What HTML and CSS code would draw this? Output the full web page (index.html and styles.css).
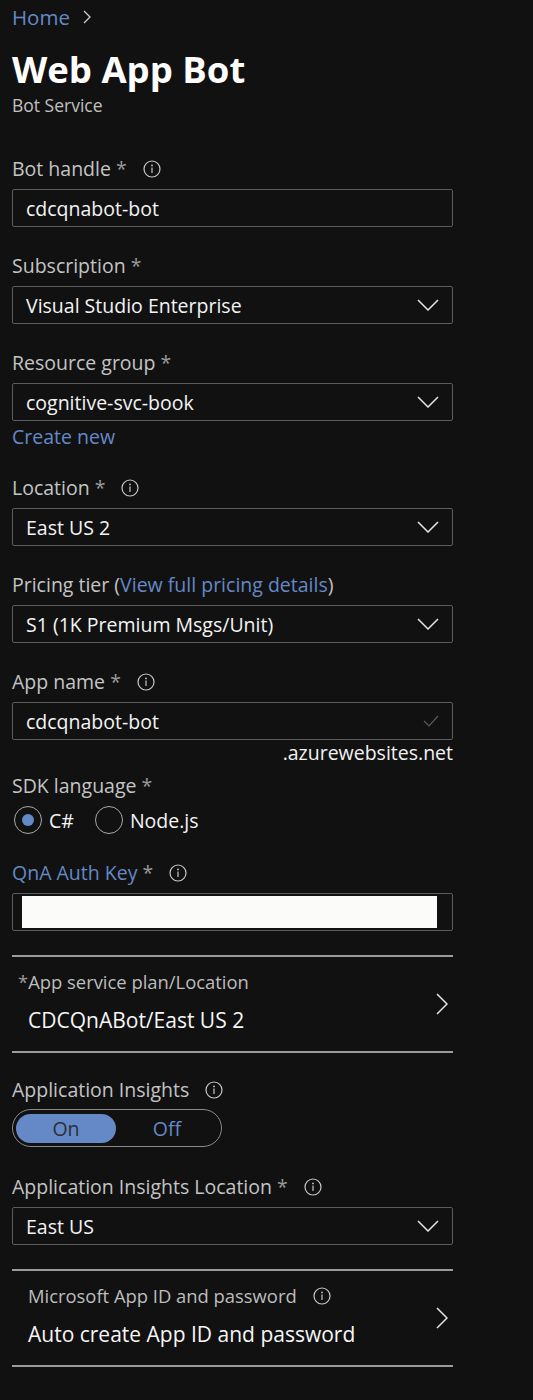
FILE: index.html
```html
<!DOCTYPE html>
<html>
<head>
<meta charset="utf-8">
<link rel="stylesheet" href="styles.css">
</head>
<body>
<div class="page">
  <div class="crumb"><span class="link">Home</span><svg class="crumb-chev" width="10" height="16" viewBox="0 0 10 16"><path d="M2 2 L8 8 L2 14" fill="none" stroke="#cfcfcf" stroke-width="1.3"/></svg></div>
  <h1 class="title">Web App Bot</h1>
  <div class="subtitle">Bot Service</div>

  <div class="field first">
    <div class="label">Bot handle <span class="req">*</span><svg class="info" width="18" height="18" viewBox="0 0 18 18"><circle cx="9" cy="9" r="8" fill="none" stroke="#c8c8c8" stroke-width="1.2"/><circle cx="9" cy="5.4" r="0.9" fill="#c8c8c8"/><path d="M9 7.6 V13" stroke="#c8c8c8" stroke-width="1.2"/></svg></div>
    <div class="control"><span class="val">cdcqnabot-bot</span></div>
  </div>

  <div class="field">
    <div class="label">Subscription <span class="req">*</span></div>
    <div class="control"><span class="val">Visual Studio Enterprise</span><svg class="dd" width="22" height="12" viewBox="0 0 22 12"><path d="M1 1 L11 11 L21 1" fill="none" stroke="#e6e6e6" stroke-width="1.5"/></svg></div>
  </div>

  <div class="field">
    <div class="label">Resource group <span class="req">*</span></div>
    <div class="control"><span class="val">cognitive-svc-book</span><svg class="dd" width="22" height="12" viewBox="0 0 22 12"><path d="M1 1 L11 11 L21 1" fill="none" stroke="#e6e6e6" stroke-width="1.5"/></svg></div>
    <div class="link create">Create new</div>
  </div>

  <div class="field after-create">
    <div class="label">Location <span class="req">*</span><svg class="info" width="18" height="18" viewBox="0 0 18 18"><circle cx="9" cy="9" r="8" fill="none" stroke="#c8c8c8" stroke-width="1.2"/><circle cx="9" cy="5.4" r="0.9" fill="#c8c8c8"/><path d="M9 7.6 V13" stroke="#c8c8c8" stroke-width="1.2"/></svg></div>
    <div class="control"><span class="val">East US 2</span><svg class="dd" width="22" height="12" viewBox="0 0 22 12"><path d="M1 1 L11 11 L21 1" fill="none" stroke="#e6e6e6" stroke-width="1.5"/></svg></div>
  </div>

  <div class="field">
    <div class="label">Pricing tier (<span class="link">View full pricing details</span>)</div>
    <div class="control"><span class="val">S1 (1K Premium Msgs/Unit)</span><svg class="dd" width="22" height="12" viewBox="0 0 22 12"><path d="M1 1 L11 11 L21 1" fill="none" stroke="#e6e6e6" stroke-width="1.5"/></svg></div>
  </div>

  <div class="field">
    <div class="label">App name <span class="req">*</span><svg class="info" width="18" height="18" viewBox="0 0 18 18"><circle cx="9" cy="9" r="8" fill="none" stroke="#c8c8c8" stroke-width="1.2"/><circle cx="9" cy="5.4" r="0.9" fill="#c8c8c8"/><path d="M9 7.6 V13" stroke="#c8c8c8" stroke-width="1.2"/></svg></div>
    <div class="control"><span class="val">cdcqnabot-bot</span><svg class="check" width="16" height="12" viewBox="0 0 16 12"><path d="M1 6 L6 11 L15 1" fill="none" stroke="#5a5a5a" stroke-width="1.2"/></svg></div>
    <div class="suffix">.azurewebsites.net</div>
  </div>

  <div class="field sdk">
    <div class="label">SDK language <span class="req">*</span></div>
    <div class="radios">
      <span class="radio on"><span class="dot"></span></span><span class="rtext">C#</span>
      <span class="radio"></span><span class="rtext">Node.js</span>
    </div>
  </div>

  <div class="field qna">
    <div class="label"><span class="link">QnA Auth Key</span> <span class="req">*</span><svg class="info" width="18" height="18" viewBox="0 0 18 18"><circle cx="9" cy="9" r="8" fill="none" stroke="#c8c8c8" stroke-width="1.2"/><circle cx="9" cy="5.4" r="0.9" fill="#c8c8c8"/><path d="M9 7.6 V13" stroke="#c8c8c8" stroke-width="1.2"/></svg></div>
    <div class="control masked"><span class="mask"></span></div>
  </div>

  <div class="blade plan">
    <div class="blade-text">
      <div class="blade-label"><span class="star">*</span>App service plan/Location</div>
      <div class="blade-val">CDCQnABot/East US 2</div>
    </div>
    <svg class="blade-chev" width="12" height="22" viewBox="0 0 12 22"><path d="M1 1 L11 11 L1 21" fill="none" stroke="#e6e6e6" stroke-width="1.5"/></svg>
  </div>

  <div class="field ai">
    <div class="label">Application Insights<svg class="info" width="18" height="18" viewBox="0 0 18 18"><circle cx="9" cy="9" r="8" fill="none" stroke="#c8c8c8" stroke-width="1.2"/><circle cx="9" cy="5.4" r="0.9" fill="#c8c8c8"/><path d="M9 7.6 V13" stroke="#c8c8c8" stroke-width="1.2"/></svg></div>
    <div class="toggle"><span class="opt sel">On</span><span class="opt off">Off</span></div>
  </div>

  <div class="field ailoc">
    <div class="label">Application Insights Location <span class="req">*</span><svg class="info" width="18" height="18" viewBox="0 0 18 18"><circle cx="9" cy="9" r="8" fill="none" stroke="#c8c8c8" stroke-width="1.2"/><circle cx="9" cy="5.4" r="0.9" fill="#c8c8c8"/><path d="M9 7.6 V13" stroke="#c8c8c8" stroke-width="1.2"/></svg></div>
    <div class="control"><span class="val">East US</span><svg class="dd" width="22" height="12" viewBox="0 0 22 12"><path d="M1 1 L11 11 L21 1" fill="none" stroke="#e6e6e6" stroke-width="1.5"/></svg></div>
  </div>

  <div class="blade appid">
    <div class="blade-text">
      <div class="blade-label">Microsoft App ID and password<svg class="info" width="18" height="18" viewBox="0 0 18 18"><circle cx="9" cy="9" r="8" fill="none" stroke="#c8c8c8" stroke-width="1.2"/><circle cx="9" cy="5.4" r="0.9" fill="#c8c8c8"/><path d="M9 7.6 V13" stroke="#c8c8c8" stroke-width="1.2"/></svg></div>
      <div class="blade-val">Auto create App ID and password</div>
    </div>
    <svg class="blade-chev" width="12" height="22" viewBox="0 0 12 22"><path d="M1 1 L11 11 L1 21" fill="none" stroke="#e6e6e6" stroke-width="1.5"/></svg>
  </div>
</div>
</body>
</html>
```

FILE: styles.css
```css
html, body {
  margin: 0;
  padding: 0;
  background: #111112;
}
body {
  font-family: "Open Sans", "Noto Sans", sans-serif;
  color: #f2f2f2;
  min-height: 1400px;
}
.page {
  width: 441px;
  padding-left: 12px;
}
.link {
  color: #6489c6;
}
.crumb {
  font-size: 20.5px;
  line-height: 34px;
  height: 34px;
  display: flex;
  align-items: center;
}
.crumb-chev {
  margin-left: 12px;
}
.title {
  margin: 12px 0 0;
  font-size: 36.5px;
  font-weight: 700;
  line-height: 46px;
  color: #ffffff;
}
.subtitle {
  font-size: 17.5px;
  line-height: 24px;
  color: #c0c0c0;
  margin-top: 1px;
}
.field {
  margin-top: 25px;
}
.field.first {
  margin-top: 38px;
}
.label {
  font-size: 19.5px;
  line-height: 28px;
  height: 28px;
  color: #c4c4c4;
  white-space: nowrap;
}
.req {
  color: #9a9a9a;
}
.info {
  display: inline-block;
  margin-left: 16px;
  vertical-align: -2px;
}
.control {
  margin-top: 6px;
  height: 36px;
  border: 1px solid #5c5c5e;
  border-radius: 2px;
  display: flex;
  align-items: center;
  padding: 0 13px;
}
.val {
  flex: 1;
  font-size: 19.5px;
  color: #f4f4f4;
}
.create {
  font-size: 19.5px;
  line-height: 28px;
  margin-top: 2px;
}
.field.after-create {
  margin-top: 23px;
}
.suffix {
  text-align: right;
  font-size: 19.5px;
  line-height: 22px;
  color: #f2f2f2;
  margin-top: 2px;
}
.field.sdk {
  margin-top: 8px;
}
.radios {
  display: flex;
  align-items: center;
  height: 32px;
  margin-top: 4px;
}
.radio {
  box-sizing: border-box;
  width: 28px;
  height: 28px;
  border: 1px solid #a8a8a8;
  border-radius: 50%;
  display: flex;
  align-items: center;
  justify-content: center;
  margin-left: 2px;
}
.radio.on .dot {
  width: 12px;
  height: 12px;
  border-radius: 50%;
  background: #6489c6;
}
.rtext {
  font-size: 19.5px;
  color: #f4f4f4;
  margin-left: 7px;
  margin-right: 19px;
}
.field.qna {
  margin-top: 23px;
}
.control.masked {
  padding: 0 15px 0 9px;
}
.mask {
  display: block;
  height: 32px;
  flex: 1;
  background: #fbfbfa;
}
.blade {
  box-sizing: border-box;
  display: flex;
  align-items: center;
  border-top: 2px solid #9b9b9b;
  border-bottom: 2px solid #9b9b9b;
  margin-top: 24px;
  height: 98px;
  padding: 0 5px 0 16px;
}
.blade-text {
  flex: 1;
}
.blade-label {
  font-size: 18.4px;
  line-height: 26px;
  color: #bdbdbd;
  white-space: nowrap;
}
.blade-val {
  font-size: 21px;
  line-height: 30px;
  color: #f6f6f6;
  margin-top: 10px;
}
.plan {
  padding-left: 6px;
}
.plan .blade-text {
  margin-top: -4px;
}
.plan .star {
  color: #9a9a9a;
}
.plan .blade-val {
  padding-left: 10px;
}
.field.ai {
  margin-top: 23px;
}
.toggle {
  box-sizing: border-box;
  margin-top: 5px;
  width: 210px;
  height: 38px;
  border: 1px solid #8a8a8a;
  border-radius: 19px;
  display: flex;
  align-items: center;
  padding: 0 3px;
}
.opt {
  width: 100px;
  height: 29px;
  border-radius: 15px;
  display: flex;
  align-items: center;
  justify-content: center;
  font-size: 19.5px;
  color: #6489c6;
}
.opt.off {
  flex: 1;
}
.opt.sel {
  background: #6489c6;
  color: #2c2f36;
}
.field.ailoc {
  margin-top: 26px;
}
.appid {
  margin-top: 24px;
}
.appid .blade-text {
  margin-top: -4px;
}
```
